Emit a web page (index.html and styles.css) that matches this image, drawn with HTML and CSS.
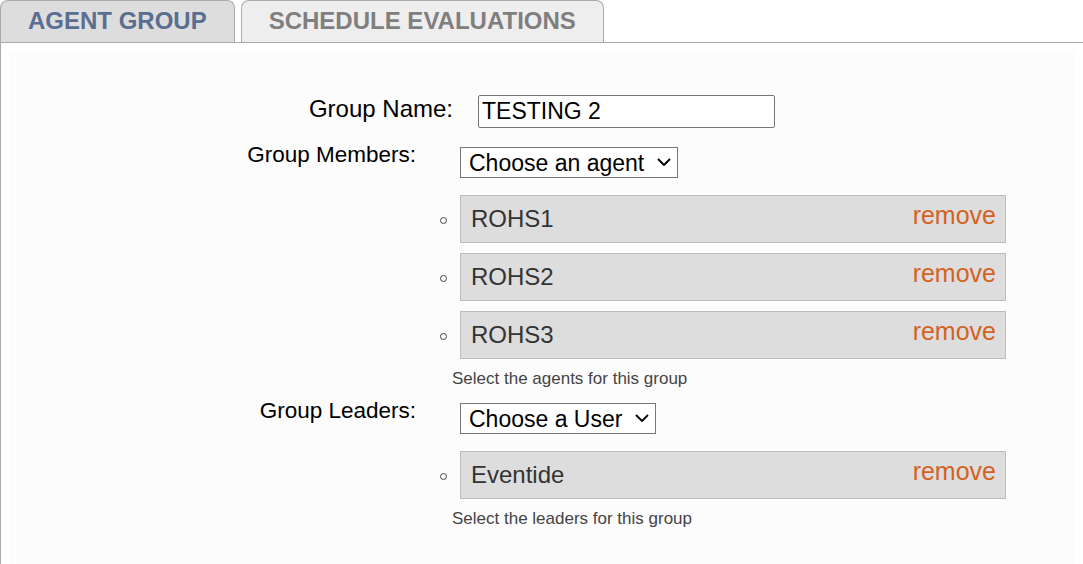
FILE: index.html
```html
<!DOCTYPE html>
<html lang="en">
<head>
<meta charset="utf-8">
<title>Agent Group</title>
<link rel="stylesheet" href="styles.css">
</head>
<body>
<div class="tabs">
  <div class="tab tab-active">AGENT GROUP</div>
  <div class="tab">SCHEDULE EVALUATIONS</div>
</div>
<div class="panel">
  <div class="panel-inner">
    <div class="row row-name">
      <label class="label label-name">Group Name:</label>
      <input class="text-input" type="text" value="TESTING 2">
    </div>

    <div class="row row-members">
      <label class="label label-list">Group Members:</label>
      <div class="field">
        <div class="select-wrap select-agent">
          <select class="select"><option>Choose an agent</option></select>
          <svg class="chevron" width="14" height="8" viewBox="0 0 14 8"><polyline points="1,1 7,7 13,1" fill="none" stroke="#000" stroke-width="1.9"/></svg>
        </div>
        <ul class="chips">
          <li class="chip-row"><span class="bullet"></span><div class="chip"><span class="chip-name">ROHS1</span><a class="remove">remove</a></div></li>
          <li class="chip-row"><span class="bullet"></span><div class="chip"><span class="chip-name">ROHS2</span><a class="remove">remove</a></div></li>
          <li class="chip-row"><span class="bullet"></span><div class="chip"><span class="chip-name">ROHS3</span><a class="remove">remove</a></div></li>
        </ul>
        <div class="hint">Select the agents for this group</div>
      </div>
    </div>

    <div class="row row-leaders">
      <label class="label label-list">Group Leaders:</label>
      <div class="field">
        <div class="select-wrap select-user">
          <select class="select"><option>Choose a User</option></select>
          <svg class="chevron" width="14" height="8" viewBox="0 0 14 8"><polyline points="1,1 7,7 13,1" fill="none" stroke="#000" stroke-width="1.9"/></svg>
        </div>
        <ul class="chips">
          <li class="chip-row"><span class="bullet"></span><div class="chip"><span class="chip-name">Eventide</span><a class="remove">remove</a></div></li>
        </ul>
        <div class="hint">Select the leaders for this group</div>
      </div>
    </div>
  </div>
</div>
</body>
</html>
```

FILE: styles.css
```css
html, body {
  margin: 0;
  padding: 0;
  background: #ffffff;
  font-family: "Liberation Sans", Arial, sans-serif;
  overflow: hidden;
}

.tabs {
  display: flex;
  align-items: flex-end;
  gap: 6px;
  height: 42px;
}

.tab {
  box-sizing: border-box;
  height: 42px;
  padding: 0 27px;
  border: 1px solid #aaaaaa;
  border-bottom: 0;
  border-radius: 8px 8px 0 0;
  background: #eeeeee;
  color: #7f7f7f;
  font-size: 24px;
  font-weight: bold;
  line-height: 39px;
  white-space: nowrap;
}

.tab-active {
  background: #dddddd;
  color: #5a6e91;
}

.panel {
  border-top: 1px solid #aaaaaa;
  border-left: 1px solid #aaaaaa;
  padding: 8px 8px 0 8px;
  background: #ffffff;
}

.panel-inner {
  background: #fcfcfc;
  padding-top: 44px;
  height: 513px;
  box-sizing: border-box;
}

.row {
  display: flex;
  align-items: flex-start;
}

.row-members {
  margin-top: 14px;
}

.row-leaders {
  margin-top: 10px;
}

.label {
  color: #000000;
  text-align: right;
  flex: none;
}

.label-name {
  width: 444px;
  font-size: 24px;
  line-height: 28px;
}

.label-list {
  width: 407px;
  font-size: 22.5px;
  line-height: 26px;
}

.text-input {
  box-sizing: border-box;
  margin: 0 0 0 25px;
  width: 297px;
  height: 33px;
  padding: 0 3px;
  border: 1px solid #767676;
  border-radius: 2px;
  background: #ffffff;
  color: #000000;
  font-family: "Liberation Sans", Arial, sans-serif;
  font-size: 23px;
}

.field {
  margin-left: 20px;
  display: flex;
  flex-direction: column;
  align-items: flex-start;
}

.select-wrap {
  position: relative;
  margin: 5px 0 0 24px;
}

.select {
  box-sizing: border-box;
  appearance: none;
  -webkit-appearance: none;
  height: 31px;
  margin: 0;
  padding: 0 0 0 8px;
  border: 1px solid #767676;
  border-radius: 0;
  background: #ffffff;
  color: #000000;
  font-family: "Liberation Sans", Arial, sans-serif;
  font-size: 23px;
  display: block;
}

.select-agent .select {
  width: 218px;
}

.select-user .select {
  width: 196px;
}

.chevron {
  position: absolute;
  right: 7px;
  top: 11px;
  pointer-events: none;
}

.chips {
  list-style: none;
  margin: 17px 0 0 0;
  padding: 0;
}

.chip-row {
  display: flex;
  align-items: flex-start;
  margin-bottom: 10px;
}

.chip-row:last-child {
  margin-bottom: 0;
}

.bullet {
  box-sizing: border-box;
  width: 7px;
  height: 7px;
  margin: 22px 13px 0 4px;
  border: 1px solid #444444;
  border-radius: 50%;
  flex: none;
}

.chip {
  box-sizing: border-box;
  width: 546px;
  height: 48px;
  padding: 0 9px 0 10px;
  border: 1px solid #bdbdbd;
  background: #dddddd;
  display: flex;
  justify-content: space-between;
  align-items: flex-start;
}

.chip-name {
  margin-top: 9px;
  font-size: 24px;
  line-height: 28px;
  color: #333333;
}

.remove {
  margin-top: 5px;
  font-size: 25px;
  line-height: 28px;
  color: #d4621f;
  cursor: pointer;
}

.hint {
  margin: 10px 0 0 16px;
  font-size: 17px;
  line-height: 19px;
  color: #444444;
}
```
